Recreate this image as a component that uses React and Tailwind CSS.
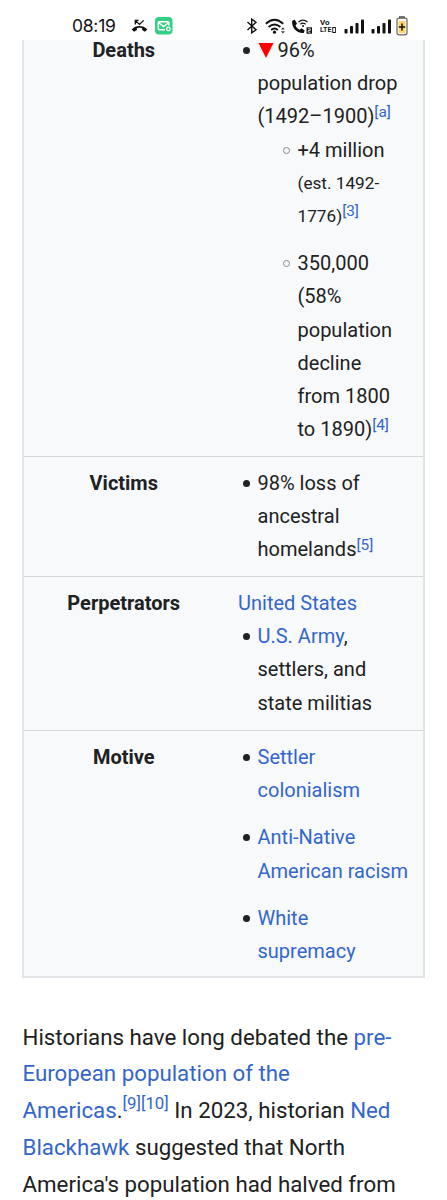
const Ref = ({ children }) => (
  <sup className="text-[0.77em] leading-none align-baseline relative -top-[0.43em] text-[#3366cc]">
    {children}
  </sup>
);

const Link = ({ children }) => (
  <a href="#" className="text-[#3366cc]">
    {children}
  </a>
);

const Item = ({ children, className = "" }) => (
  <li className={`flex ${className}`}>
    <span className="mt-[13px] ml-[4.5px] mr-2 size-[7px] shrink-0 rounded-full bg-[#202122]" />
    <div>{children}</div>
  </li>
);

const SubItem = ({ children, className = "" }) => (
  <li className={`flex ${className}`}>
    <span className="mt-[13px] ml-[24.5px] mr-2 size-[7px] shrink-0 rounded-full border border-[#8a8b8c]" />
    <div>{children}</div>
  </li>
);

const Row = ({ label, children, className = "" }) => (
  <div
    className={`flex shrink-0 border-b border-[#d5d7db] pt-[10px] ${className}`}
  >
    <div className="w-[199.5px] shrink-0 text-center font-bold">{label}</div>
    <div className="ml-[14.5px] whitespace-nowrap">{children}</div>
  </div>
);

const Signal = () => (
  <svg width="21" height="15" viewBox="0 0 21 15" fill="#111">
    <rect x="0.5" y="10" width="3" height="4.5" rx="0.8" />
    <rect x="6" y="7" width="3" height="7.5" rx="0.8" />
    <rect x="11.5" y="4" width="3" height="10.5" rx="0.8" />
    <rect x="17" y="0.5" width="3" height="14" rx="0.8" />
  </svg>
);

const StatusBar = () => (
  <header className="flex h-10 shrink-0 items-center pt-3 pl-[72px]">
    <span className="w-[59px] font-['Inter'] text-[17.5px] leading-none tracking-[-0.25px] text-[#111]">
      08:19
    </span>
    {/* missed call */}
    <svg width="17" height="14" viewBox="0 0 18 15" fill="none" stroke="#111">
      <path d="M4.5 6V1.5H8M4.8 1.8l4.2 4 4.5-4.3" strokeWidth="1.4" />
      <path
        d="M.6 11.2C5 6.3 13 6.3 17.4 11.2L14.8 13.6 11.8 11.7V9.9C10 9.3 8 9.3 6.2 9.9V11.7L3.2 13.6Z"
        fill="#111"
        stroke="none"
      />
    </svg>
    {/* mail */}
    <svg className="ml-[7px]" width="18" height="18" viewBox="0 0 18 18" fill="none">
      <rect width="17.5" height="17.5" rx="4" fill="#34cf82" />
      <path
        d="M10 12.8H4.3a1 1 0 0 1-1-1V5.7a1 1 0 0 1 1-1h8.6a1 1 0 0 1 1 1V8.5M3.5 5.5l5.1 4 5.1-4"
        stroke="#fff"
        strokeWidth="1.5"
      />
      <circle cx="13.4" cy="12" r="1.8" stroke="#fff" strokeWidth="1.3" />
    </svg>
    {/* bluetooth */}
    <svg className="ml-[73px]" width="12" height="16" viewBox="0 0 12 16" fill="none">
      <path d="M1.5 4l8.5 7.8-4.3 3V1.2l4.3 3L1.5 12" stroke="#111" strokeWidth="1.4" />
    </svg>
    {/* wifi */}
    <svg className="ml-[7px]" width="21" height="17" viewBox="0 0 21 17" fill="none">
      <path
        d="M.8 5.7Q9.5-2.2 18.2 5.7M3.6 9Q9.5 3.8 15.4 9M6.2 12Q9.5 9 12.8 12"
        stroke="#111"
        strokeWidth="1.9"
      />
      <circle cx="9.5" cy="14.2" r="1.6" fill="#111" />
      <path d="M16 11.5l1.9-2.2 1.9 2.2zM16 13.2l1.9 2.2 1.9-2.2z" fill="#333" />
    </svg>
    {/* wifi calling */}
    <svg className="ml-[5px]" width="22" height="17" viewBox="0 0 22 17" fill="none">
      <path
        d="M1.2 2.7L3.8 1.8 6 5.6 4.5 7.4C5.5 9.4 6.7 10.7 8.7 11.7L10.5 10.2 13.7 12.4 12.7 15C6 15.8.2 9.4 1.2 2.7Z"
        fill="#111"
      />
      <path d="M7.5 4Q12 .2 16.5 4M9.4 6.3Q12 4.1 14.6 6.3" stroke="#111" strokeWidth="1.2" />
      <circle cx="12" cy="8" r="1" fill="#111" />
      <rect x="15.5" y="9.3" width="5.5" height="6.4" fill="#111" />
      <path d="M17 10.8h2.3v1.7H17.2v1.7h2.3" stroke="#fff" strokeWidth=".8" />
    </svg>
    {/* VoLTE */}
    <div className="ml-[7px] flex w-[17px] flex-col font-['Roboto'] text-[8px] leading-[7.5px] font-bold text-[#111]">
      <span>Vo</span>
      <span className="flex origin-left scale-x-[0.88] items-center">
        LTE
        <i className="ml-[1px] h-[6px] w-[4px] shrink-0 border-[1.5px] border-[#111]" />
      </span>
    </div>
    <div className="ml-[7px] flex gap-[6px]">
      <Signal />
      <Signal />
    </div>
    {/* battery */}
    <svg className="ml-[4px]" width="12" height="20" viewBox="0 0 12 20" fill="none">
      <rect x="3" y="0" width="6" height="3" fill="#777" />
      <rect x="1" y="2.2" width="10" height="16.6" rx="2" fill="#fff" stroke="#68635c" strokeWidth="1.2" />
      <rect x="2.6" y="5" width="6.8" height="12.2" fill="#ffd36c" />
      <path d="M6 7.5v7M2.8 11h6.4" stroke="#111" strokeWidth="1.5" />
    </svg>
  </header>
);

const App = () => {
  return (
    <div className="flex h-[1200px] w-[447px] flex-col bg-white font-['Roboto',sans-serif] text-[#202122]">
      <StatusBar />
      <div className="ml-[22px] flex h-[938px] w-[403px] shrink-0 flex-col border-x-2 border-b-2 border-[#e2e3e7] bg-[#f8f9fb] text-[20px] leading-[33.2px]">
        <Row label="Deaths" className="-mt-4 h-[433px]">
          <ul>
            <Item>
              <svg className="mr-1 inline-block align-[-1px]" width="16" height="15" viewBox="0 0 16 15">
                <path d="M.5 0h15L8 15z" fill="#f00" />
              </svg>
              96%
              <br />
              population drop
              <br />
              (1492–1900)<Ref>[a]</Ref>
            </Item>
            <li>
              <ul className="ml-5">
                <SubItem className="mb-[14px] h-[99.6px]">
                  +4 million
                  <div className="text-[17.2px]">(est. 1492-</div>
                  <div className="h-[33.2px] text-[17.2px]">
                    1776)
                    <sup className="relative -top-[6px] align-baseline text-[15.4px] leading-none text-[#3366cc]">
                      [3]
                    </sup>
                  </div>
                </SubItem>
                <SubItem>
                  350,000
                  <br />
                  (58%
                  <br />
                  population
                  <br />
                  decline
                  <br />
                  from 1800
                  <br />
                  to 1890)<Ref>[4]</Ref>
                </SubItem>
              </ul>
            </li>
          </ul>
        </Row>
        <Row label="Victims" className="h-[120px]">
          <ul>
            <Item>
              98% loss of
              <br />
              ancestral
              <br />
              homelands<Ref>[5]</Ref>
            </Item>
          </ul>
        </Row>
        <Row label="Perpetrators" className="h-[154px]">
          <Link>United States</Link>
          <ul>
            <Item>
              <Link>U.S. Army</Link>,
              <br />
              settlers, and
              <br />
              state militias
            </Item>
          </ul>
        </Row>
        <Row label="Motive" className="border-b-0">
          <ul className="flex flex-col gap-[14px]">
            <Item>
              <Link>
                Settler
                <br />
                colonialism
              </Link>
            </Item>
            <Item>
              <Link>
                Anti-Native
                <br />
                American racism
              </Link>
            </Item>
            <Item>
              <Link>
                White
                <br />
                supremacy
              </Link>
            </Item>
          </ul>
        </Row>
      </div>
      <p className="mt-[40.5px] ml-[22.5px] h-[181px] text-[22.3px] leading-[36.8px] whitespace-nowrap">
        Historians have long debated the <Link>pre-</Link>
        <br />
        <Link>European population of the</Link>
        <br />
        <Link>Americas</Link>.
        <sup className="relative -top-[9px] align-baseline text-[16.8px] leading-none text-[#3366cc]">
          [9][10]
        </sup>{" "}
        In 2023, historian <Link>Ned</Link>
        <br />
        <Link>Blackhawk</Link> suggested that North
        <br />
        America's population had halved from
      </p>
    </div>
  );
};

export default App;
